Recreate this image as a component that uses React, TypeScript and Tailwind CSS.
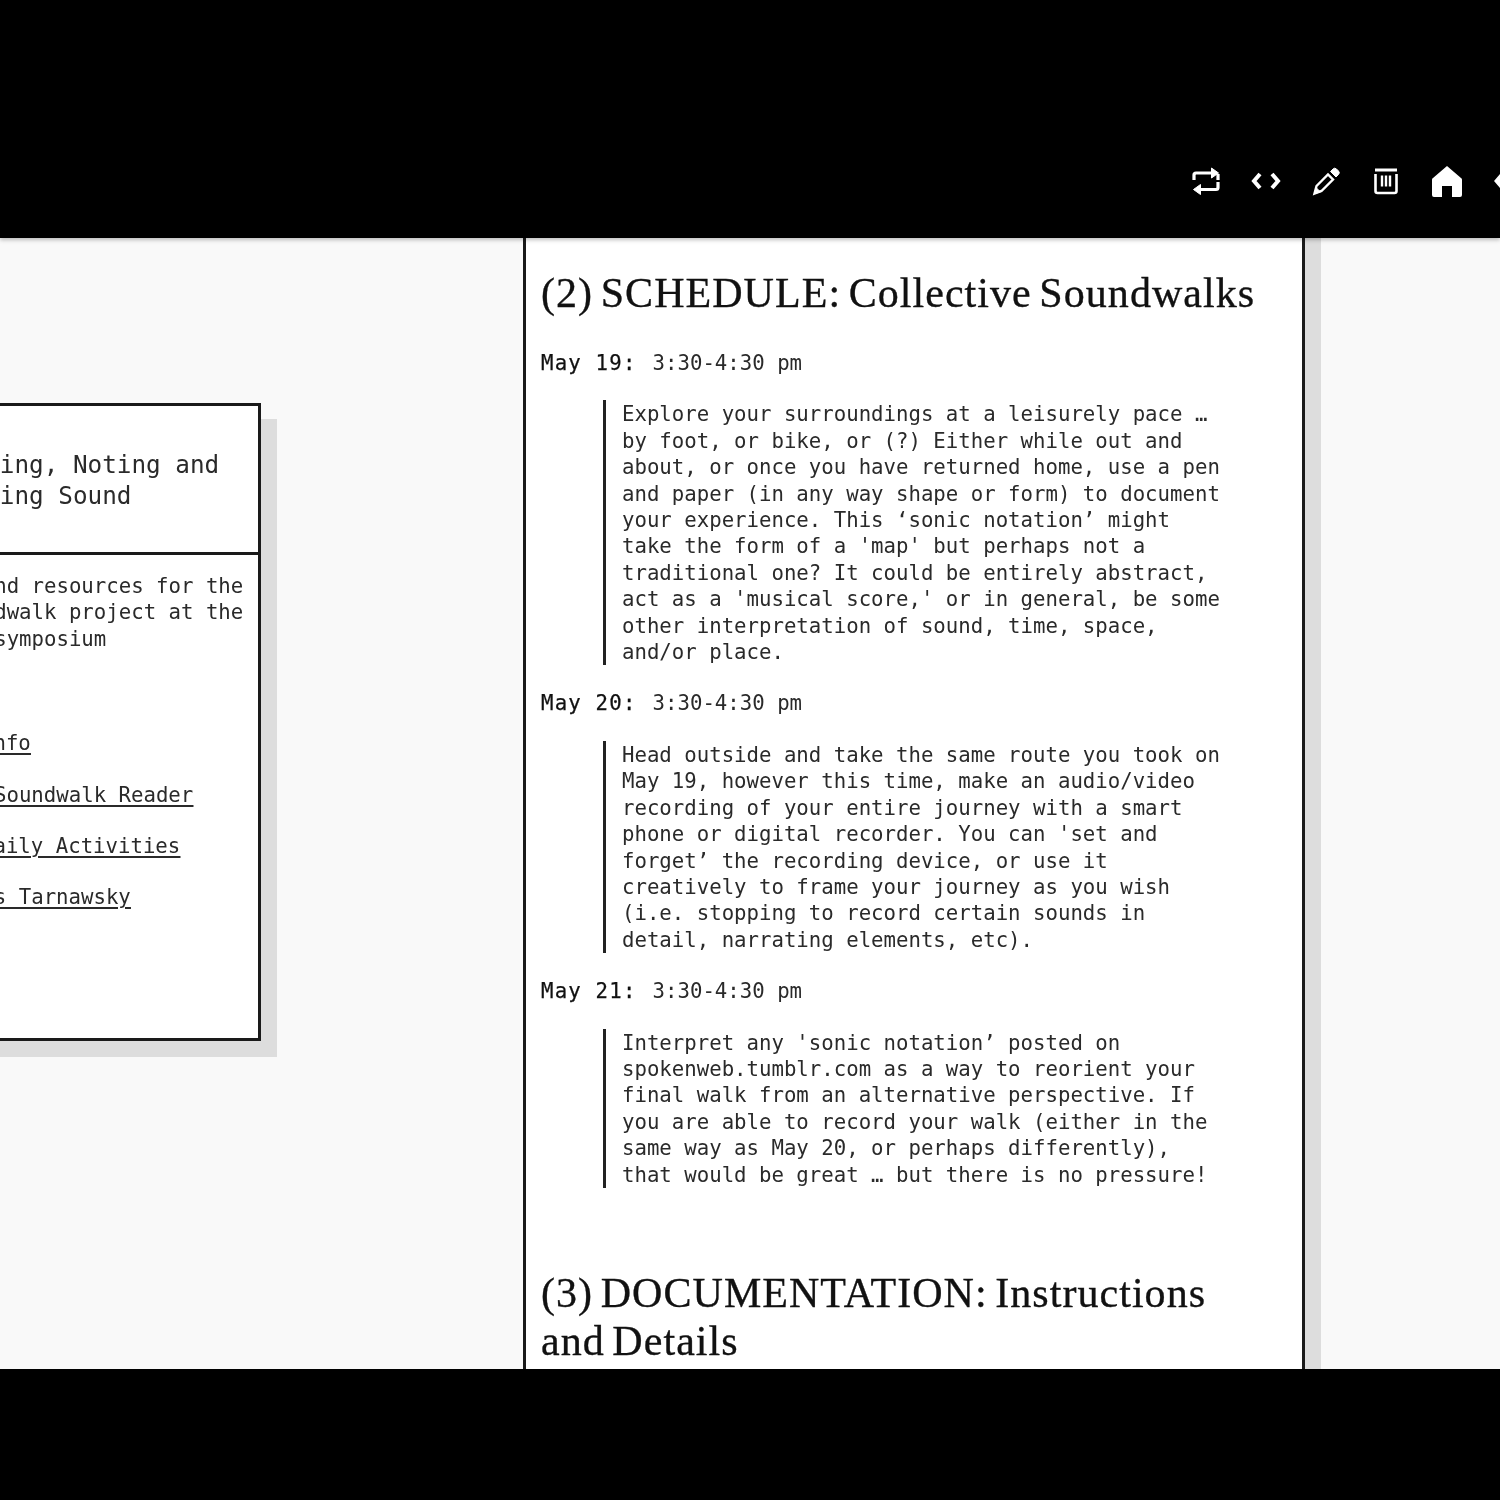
const ff = "[font-family:'DejaVu_Sans_Mono','Liberation_Mono',monospace]";

const Icons = () => (
  <div className="flex translate-x-[23px] items-center justify-end gap-[30px] pt-[165px] text-white">
    <svg width="30" height="30" viewBox="0 0 30 30" fill="none" stroke="currentColor" strokeWidth="3.200">
      <path d="M3 14V9a2 2 0 0 1 2-2h19M27 16v5.500a2 2 0 0 1-2 2H6" />
      <path d="M20.500 2l7 5-7 5z" fill="currentColor" strokeWidth="1" /><path d="M9.500 18.500l-7 5 7 5z" fill="currentColor" strokeWidth="1" />
      <path d="M27 8v6" />
    </svg>
    <svg width="30" height="30" viewBox="0 0 30 30" fill="none" stroke="currentColor" strokeWidth="4">
      <path d="M9 8 3 15l6 7" /><path d="M21 8l6 7-6 7" />
    </svg>
    <svg width="30" height="30" viewBox="0 0 30 30" fill="none" stroke="currentColor" strokeWidth="2.400">
      <path d="M3.500 27.500 5.500 20 17 8.500l5 5L10.500 25z" fill="none" />
      <path d="M3.500 27.500l1.500-6 4.500 4.500z" fill="currentColor" strokeWidth="1" />
      <path d="M19.500 5.500 22 3a2.500 2.500 0 0 1 3.500 0l2 2a2.500 2.500 0 0 1 0 3.500L25 11z" fill="currentColor" strokeWidth="1" />
    </svg>
    <svg width="30" height="30" viewBox="0 0 30 30" fill="none" stroke="currentColor" strokeWidth="3">
      <path d="M4 4h22" /><path d="M4.500 8v17a2 2 0 0 0 2 2h17a2 2 0 0 0 2-2V8" strokeWidth="2.600" /><path d="M11 9.500v11M15 9.500v11M19 9.500v11" strokeWidth="2.400" />
    </svg>
    <svg width="32" height="32" viewBox="0 0 32 32" fill="currentColor">
      <path d="M16 1 30 13a2 2 0 0 1 1 2v15a2 2 0 0 1-2 2h-8V21h-10v11H3a2 2 0 0 1-2-2V15a2 2 0 0 1 1-2z" />
    </svg>
    <svg width="30" height="30" viewBox="0 0 30 30" fill="currentColor" stroke="currentColor" strokeWidth="3">
      <path d="M9 8 3 15l6 7" />
    </svg>
  </div>
);

const walks = [
  {
    date: "May 19:",
    time: "3:30-4:30 pm",
    text: `Explore your surroundings at a leisurely pace …
by foot, or bike, or (?) Either while out and
about, or once you have returned home, use a pen
and paper (in any way shape or form) to document
your experience. This ‘sonic notation’ might
take the form of a 'map' but perhaps not a
traditional one? It could be entirely abstract,
act as a 'musical score,' or in general, be some
other interpretation of sound, time, space,
and/or place.`,
  },
  {
    date: "May 20:",
    time: "3:30-4:30 pm",
    text: `Head outside and take the same route you took on
May 19, however this time, make an audio/video
recording of your entire journey with a smart
phone or digital recorder. You can 'set and
forget’ the recording device, or use it
creatively to frame your journey as you wish
(i.e. stopping to record certain sounds in
detail, narrating elements, etc).`,
  },
  {
    date: "May 21:",
    time: "3:30-4:30 pm",
    text: `Interpret any 'sonic notation’ posted on
spokenweb.tumblr.com as a way to reorient your
final walk from an alternative perspective. If
you are able to record your walk (either in the
same way as May 20, or perhaps differently),
that would be great … but there is no pressure!`,
  },
];

const heading = "font-['Liberation_Serif',serif] text-[42px] leading-[48px] tracking-[1.05px] [word-spacing:-4px] text-[#111] [-webkit-text-stroke:0.35px_#111]";

export default function App() {
  return (
    <div className={`h-[1500px] w-[1500px] overflow-hidden bg-black blur-[0.5px] ${ff} text-[20.7px] leading-[26.4px] text-[#2a2a2a]`}>
      <header className="relative z-10 h-[238px] shadow-[0_2px_4px_rgba(0,0,0,0.25)]">
        <div className="h-[238px] overflow-hidden">
          <Icons />
        </div>
      </header>
      <main className="flex h-[1131px] overflow-hidden bg-[#f9f9f9]">
        <aside className="mt-[165px] -ml-[20px] h-[638px] w-[281px] shrink-0 border-y-[3px] border-r-[3px] border-[#1a1a1a] bg-white shadow-[16px_16px_0_#ddd]">
          <div className="h-[149px] overflow-hidden border-b-[3px] border-[#1a1a1a] pt-[43px] pl-[20px] text-[24.3px] leading-[31px] whitespace-nowrap">
            <p className="-ml-[88px]">Listening, Noting and</p>
            <p className="-ml-[88px]">Recording Sound</p>
          </div>
          <div className="overflow-hidden pt-[18px] pl-[20px] whitespace-nowrap">
            <p className="-ml-[93px]">Links and resources for the</p>
            <p className="-ml-[93px]">my soundwalk project at the</p>
            <p className="-ml-[93px]">online symposium</p>
            <div className="mt-[78px] flex flex-col gap-[25px] underline underline-offset-[3px]">
              <a className="-ml-[19px]">Info</a>
              <a className="-ml-[6px]">Soundwalk Reader</a>
              <a className="-ml-[19px]">Daily Activities</a>
              <a className="-ml-[56px]">Chris Tarnawsky</a>
            </div>
          </div>
        </aside>
        <section className="ml-[262px] h-[1400px] w-[782px] shrink-0 border-x-[3px] border-[#1a1a1a] bg-white px-[15px] pt-[31px] shadow-[16px_0_0_#ddd]">
          <h2 className={heading}>(2) SCHEDULE: Collective Soundwalks</h2>
          <div className="mt-[33px]">
            {walks.map((w) => (
              <div key={w.date} className="mb-[25px]">
                <p>
                  <span className="mr-[16px] tracking-[1.2px] text-[#111] [-webkit-text-stroke:0.25px_#111]">{w.date}</span>
                  {w.time}
                </p>
                <blockquote className="mt-[24px] ml-[62px] border-l-[3px] border-[#222] pt-[1px] pl-[16px] whitespace-pre-line">{w.text}</blockquote>
              </div>
            ))}
          </div>
          <h2 className={`mt-[81px] ${heading}`}>(3) DOCUMENTATION: Instructions<br />and Details</h2>
        </section>
      </main>
    </div>
  );
}
